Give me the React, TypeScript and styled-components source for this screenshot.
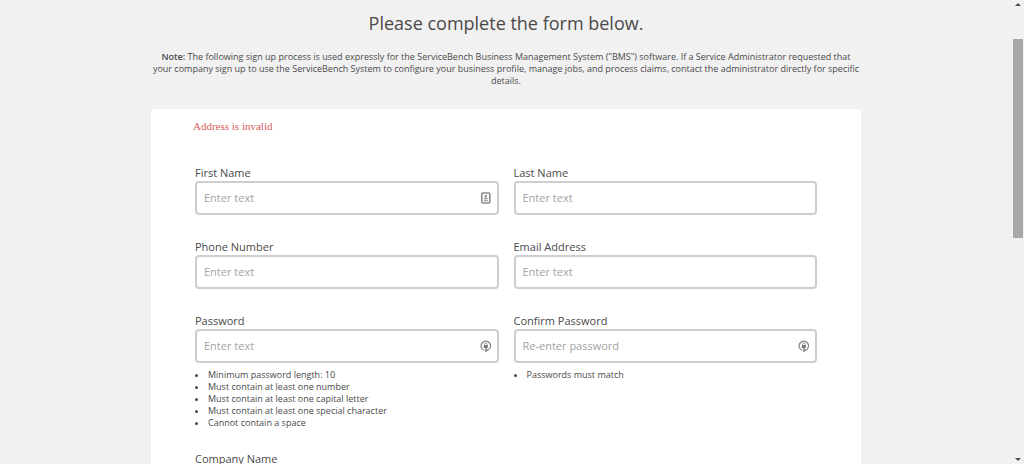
import React, { useId } from "react";
import styled, { createGlobalStyle } from "styled-components";

const GlobalStyle = createGlobalStyle`
  *, *::before, *::after { box-sizing: border-box; }
  body {
    margin: 0;
    background: #f1f1f1;
    color: #4a4a4a;
    font-family: "Open Sans", "Liberation Sans", sans-serif;
  }
`;

const Shell = styled.div`
  display: flex;
  height: 100vh;
  overflow: hidden;
`;

const Page = styled.main`
  flex: 1;
  min-width: 0;
  padding: 8px 16px 0;
  overflow: hidden;
`;

const Content = styled.div`
  max-width: 710px;
  margin: 0 auto;
`;

const Title = styled.h1`
  margin: 0 0 13px;
  font-size: 18px;
  line-height: 30px;
  font-weight: 400;
  text-align: center;
`;

const Note = styled.p`
  margin: 0 0 22px;
  font-size: 9px;
  line-height: 12px;
  text-align: center;

  strong { font-weight: 600; }
`;

const Card = styled.form`
  padding: 9px 44px 40px;
  background: #fff;
  border-radius: 4px;
`;

const ErrorMessage = styled.p`
  margin: 0 -2px 31px;
  color: #d9605c;
  font-family: "Liberation Serif", serif;
  font-size: 11px;
  line-height: 16px;
`;

const Fields = styled.div`
  display: grid;
  grid-template-columns: repeat(2, minmax(0, 1fr));
  column-gap: 15px;
  row-gap: 24px;
`;

const FieldGroup = styled.div`
  display: flex;
  flex-direction: column;
`;

const Label = styled.label`
  font-size: 11px;
  line-height: 16px;
`;

const InputBox = styled.div`
  display: flex;
  align-items: center;
  height: 34px;
  padding: 0 5px 0 7px;
  border: 2px solid #cecece;
  border-radius: 4px;
  background: #fff;

  &:focus-within { border-color: #999; }
`;

const Input = styled.input`
  flex: 1;
  min-width: 0;
  padding: 0;
  border: 0;
  outline: 0;
  background: transparent;
  color: #4a4a4a;
  font: 11px/16px "Open Sans", "Liberation Sans", sans-serif;

  &::placeholder { color: #a3a3a3; opacity: 1; }
`;

const Rules = styled.ul`
  margin: 6px 0 -2px;
  padding: 0 0 0 13px;
  font-size: 9px;
  line-height: 12px;
`;

const Scrollbar = styled.div`
  display: flex;
  flex-direction: column;
  justify-content: space-between;
  align-items: center;
  width: 12px;
  padding: 3px 0;
  background: #f1f1f1;
`;

const Track = styled.div`
  flex: 1;
  width: 100%;
  padding: 33px 1px 0;
`;

const Thumb = styled.div`
  height: 199px;
  background: #a8a8a8;
`;

const ContactIcon = () => (
  <svg width="12" height="14" viewBox="0 0 12 14" fill="none" aria-hidden="true">
    <rect x="1.8" y="2" width="8" height="10" rx="1" stroke="#8c8c8c" strokeWidth="1.6" />
    <circle cx="5.8" cy="5.2" r="1.1" fill="#777" />
    <path d="M3.8 8.2c0-1.8 4-1.8 4 0zM3.8 9.2h4v1h-4z" fill="#888" />
  </svg>
);

const LockIcon = () => (
  <svg width="12" height="14" viewBox="0 0 12 14" fill="none" aria-hidden="true">
    <path d="M4 11.2A4.7 4.7 0 1 1 7.6 11.2" stroke="#8c8c8c" strokeWidth="1.3" />
    <path d="M4.5 6.4V5.2a1.3 1.3 0 0 1 2.6 0v1.2" stroke="#999" />
    <path d="M3.8 6h4v3h-4z" fill="#777" />
    <path d="M5.2 8.8h1.4V13H5.2zM5.8 10.6h2.4v1.3H5.8z" fill="#858585" />
  </svg>
);

type FieldProps = {
  label: string;
  name: string;
  type?: string;
  placeholder?: string;
  icon?: React.ReactNode;
  rules?: string[];
};

function Field({ label, name, type = "text", placeholder = "Enter text", icon, rules }: FieldProps) {
  const id = useId();
  return (
    <FieldGroup>
      <Label htmlFor={id}>{label}</Label>
      <InputBox>
        <Input id={id} name={name} type={type} placeholder={placeholder} />
        {icon}
      </InputBox>
      {rules && (
        <Rules>
          {rules.map((rule) => (
            <li key={rule}>{rule}</li>
          ))}
        </Rules>
      )}
    </FieldGroup>
  );
}

const passwordRules = [
  "Minimum password length: 10",
  "Must contain at least one number",
  "Must contain at least one capital letter",
  "Must contain at least one special character",
  "Cannot contain a space",
];

export default function App() {
  return (
    <>
      <GlobalStyle />
      <Shell>
        <Page>
          <Content>
            <Title>Please complete the form below.</Title>
            <Note>
              <strong>Note:</strong> The following sign up process is used expressly for the
              ServiceBench Business Management System ("BMS") software. If a Service Administrator
              requested that your company sign up to use the ServiceBench System to configure your
              business profile, manage jobs, and process claims, contact the administrator directly
              for specific details.
            </Note>
            <Card>
              <ErrorMessage role="alert">Address is invalid</ErrorMessage>
              <Fields>
                <Field label="First Name" name="firstName" icon={<ContactIcon />} />
                <Field label="Last Name" name="lastName" />
                <Field label="Phone Number" name="phone" type="tel" />
                <Field label="Email Address" name="email" type="email" />
                <Field
                  label="Password"
                  name="password"
                  type="password"
                  icon={<LockIcon />}
                  rules={passwordRules}
                />
                <Field
                  label="Confirm Password"
                  name="confirmPassword"
                  type="password"
                  placeholder="Re-enter password"
                  icon={<LockIcon />}
                  rules={["Passwords must match"]}
                />
                <Field label="Company Name" name="company" />
              </Fields>
            </Card>
          </Content>
        </Page>
        <Scrollbar aria-hidden="true">
          <svg width="6" height="3" viewBox="0 0 6 3"><path d="M0 3 3 0l3 3z" fill="#505050" /></svg>
          <Track>
            <Thumb />
          </Track>
          <svg width="6" height="3" viewBox="0 0 6 3"><path d="M0 0h6L3 3z" fill="#505050" /></svg>
        </Scrollbar>
      </Shell>
    </>
  );
}
